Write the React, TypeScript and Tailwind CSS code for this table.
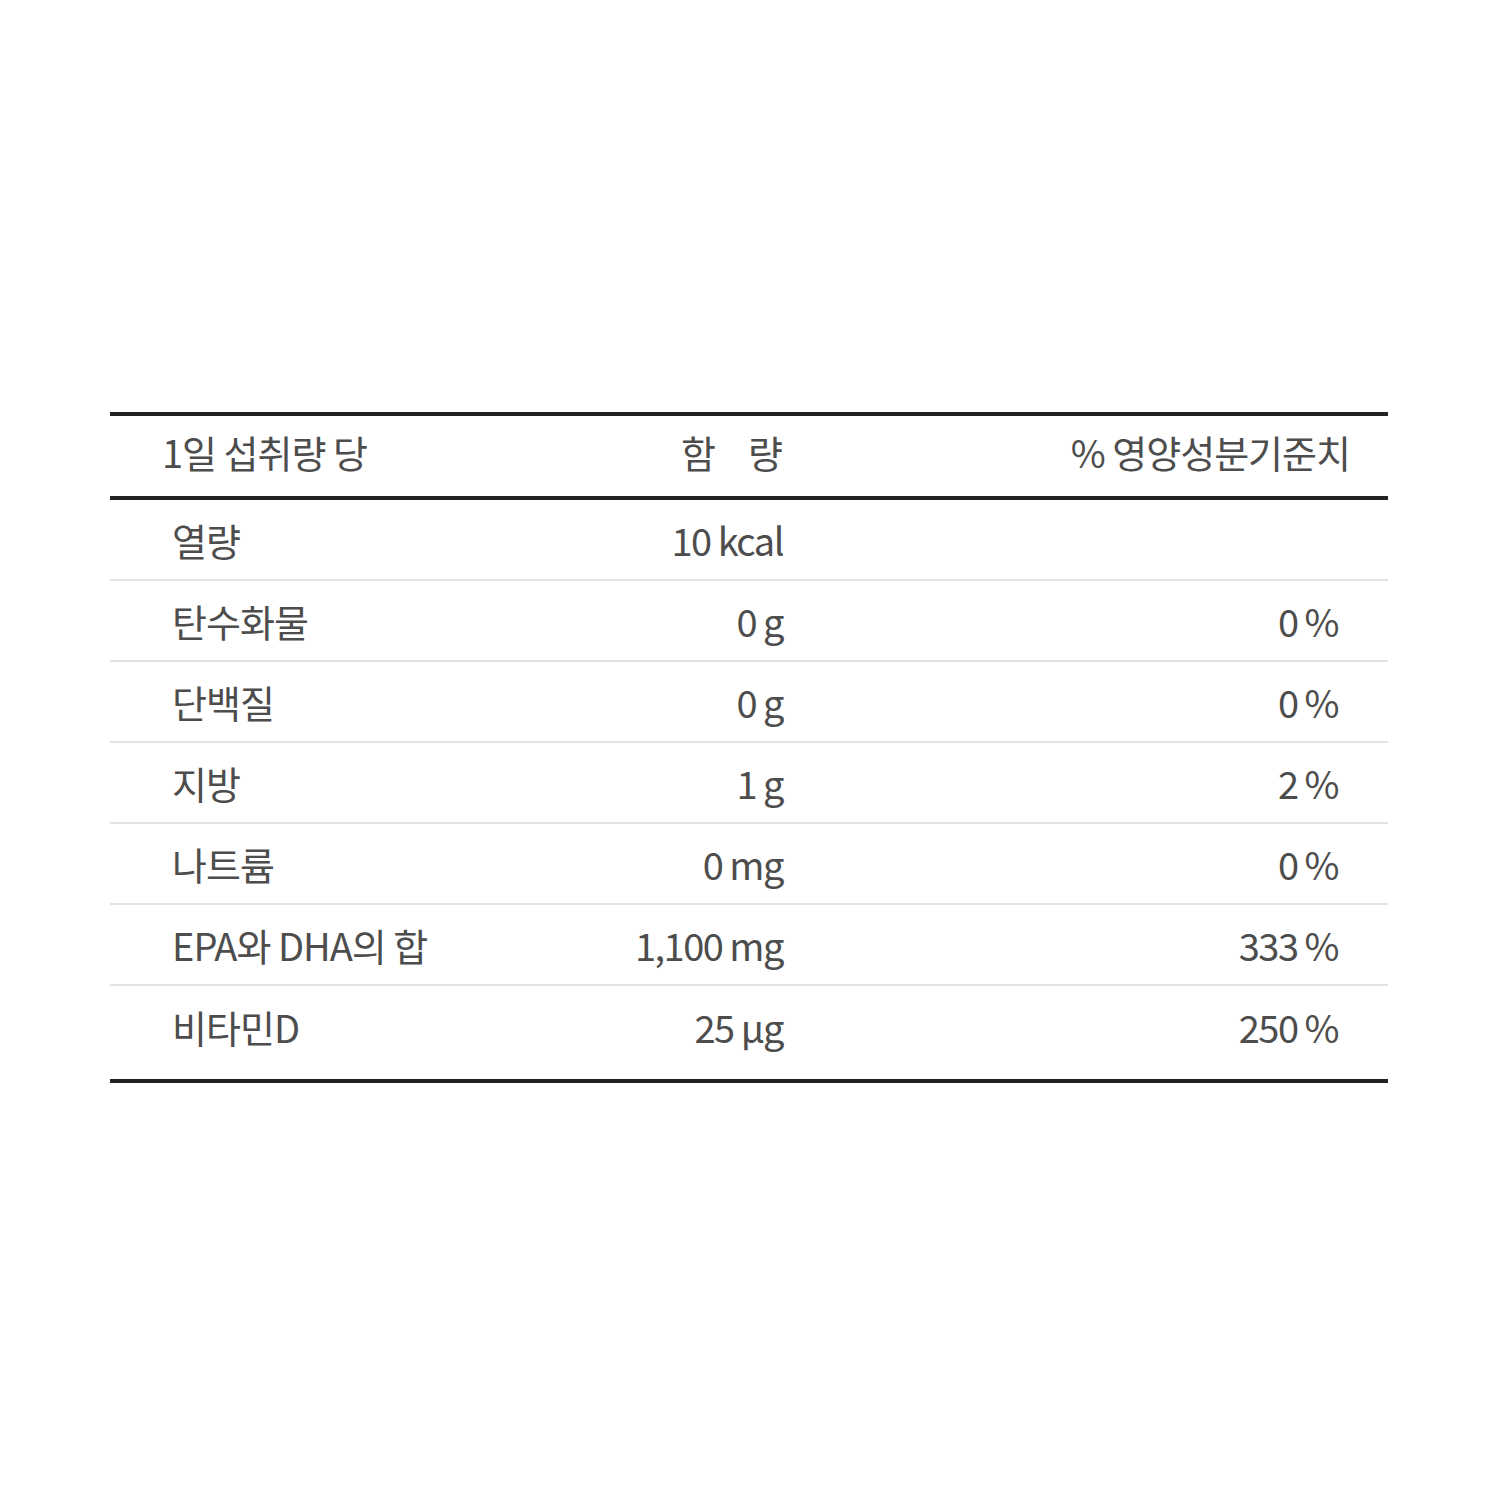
const rows = [
  { name: "열량", amount: "10 kcal", pct: "" },
  { name: "탄수화물", amount: "0 g", pct: "0 %" },
  { name: "단백질", amount: "0 g", pct: "0 %" },
  { name: "지방", amount: "1 g", pct: "2 %" },
  { name: "나트륨", amount: "0 mg", pct: "0 %" },
  { name: "EPA와 DHA의 합", amount: "1,100 mg", pct: "333 %" },
  { name: "비타민D", amount: "25 µg", pct: "250 %" },
];

export default function App() {
  return (
    <div
      className="w-full h-[1500px] bg-white text-[#4d4d4d] text-[38px] tracking-[-1px]"
      style={{ fontFamily: "'Noto Sans CJK KR', 'Noto Sans', sans-serif" }}
    >
      <div className="pt-[412px] pl-[110px]">
        <div className="w-[1278px] border-t-[4px] border-b-[4px] border-[#222]">
          {/* header */}
          <div className="flex items-center h-[84px] pb-[10px] border-b-[4px] border-[#222]">
            <div className="w-[420px] pl-[52px]">1일 섭취량 당</div>
            <div className="w-[253px] text-right tracking-[0px]">
              함<span className="inline-block w-[32px]"></span>량
            </div>
            <div className="flex-1 text-right pr-[38px]">% 영양성분기준치</div>
          </div>

          {rows.map((r, i) => (
            <div
              key={r.name}
              className={
                i === rows.length - 1
                  ? "flex items-center h-[93px] pb-[12px]"
                  : "flex items-center h-[81px] border-b-2 border-[#e2e2e2]"
              }
            >
              <div className="w-[420px] pl-[62px]">{r.name}</div>
              <div className="w-[253px] text-right tracking-[-1.5px]">{r.amount}</div>
              <div className="flex-1 text-right pr-[50px] tracking-[-1.5px]">{r.pct}</div>
            </div>
          ))}
        </div>
      </div>
    </div>
  );
}
